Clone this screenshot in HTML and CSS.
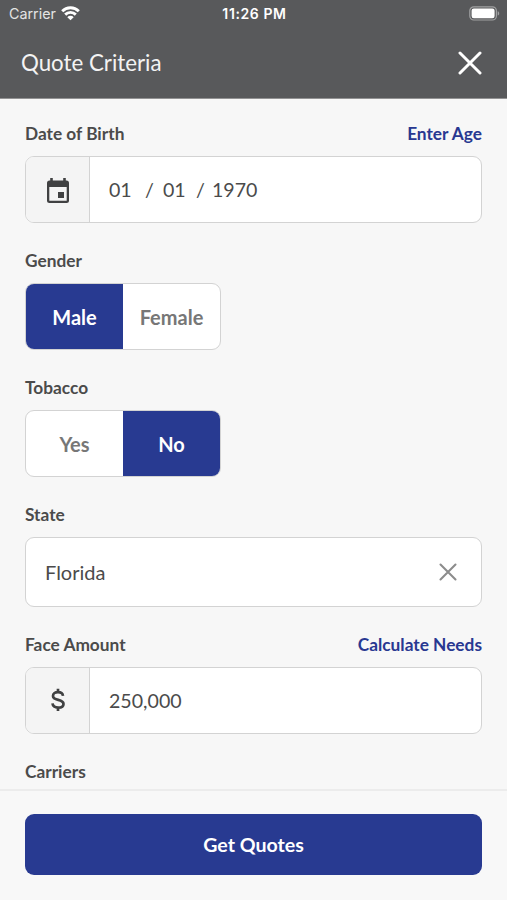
FILE: index.html
```html
<!DOCTYPE html>
<html lang="en">
<head>
<meta charset="utf-8">
<title>Quote Criteria</title>
<link rel="stylesheet" href="styles.css">
</head>
<body>
<div class="screen">
  <header class="header">
    <div class="status">
      <div class="carrier"><span>Carrier</span>
        <svg width="19" height="15" viewBox="0 0 19 15" fill="none" stroke="#fff" stroke-width="2.9"><path d="M1.2 5.2a11.8 11.8 0 0 1 16.6 0M4.2 8.6a7.5 7.5 0 0 1 10.6 0"/><path d="M9.5 14.3L6.3 11.2a4.5 4.5 0 0 1 6.4 0z" fill="#fff" stroke="none"/></svg>
      </div>
      <time class="clock">11:26 PM</time>
      <svg class="battery" width="31" height="15" viewBox="0 0 31 15"><rect x=".8" y=".8" width="26.6" height="13.2" rx="4" fill="none" stroke="#a0a1a2" stroke-width="1.2"/><rect x="2.6" y="2.6" width="23" height="9.6" rx="2.2" fill="#fff"/><path d="M28.7 5.2c2 .7 2 3.7 0 4.4z" fill="#a0a1a2"/></svg>
    </div>
    <div class="titlebar">
      <h1 class="title">Quote Criteria</h1>
      <svg class="close" width="24" height="24" viewBox="0 0 24 24" fill="none" stroke="#fff" stroke-width="3" stroke-linecap="round"><path d="M2 2l20 20M22 2L2 22"/></svg>
    </div>
  </header>
  <main class="form">
    <section class="field">
      <div class="label-row"><span class="label">Date of Birth</span><a class="link">Enter Age</a></div>
      <div class="box">
        <div class="addon"><svg class="calendar" width="24" height="26" viewBox="0 0 24 26"><path fill="#404142" fill-rule="evenodd" d="M4.2 0h2.6v2.5h10.4V0h2.6v2.5h.7A2.5 2.5 0 0 1 23 5v17.5a2.5 2.5 0 0 1-2.5 2.5h-17A2.5 2.5 0 0 1 1 22.500V5a2.5 2.5 0 0 1 2.5-2.500h.7zM3.300 9v13.700h17.400V9zM12 14h6v6h-6z"/></svg></div>
        <div class="value date"><span class="day">01</span><span class="sep">/</span><span class="month">01</span><span class="sep2">/</span><span>1970</span></div>
      </div>
    </section>
    <section class="field">
      <div class="label-row"><span class="label">Gender</span></div>
      <div class="box toggle"><div class="option selected">Male</div><div class="option">Female</div></div>
    </section>
    <section class="field">
      <div class="label-row"><span class="label">Tobacco</span></div>
      <div class="box toggle"><div class="option">Yes</div><div class="option selected">No</div></div>
    </section>
    <section class="field">
      <div class="label-row"><span class="label">State</span></div>
      <div class="box select"><span>Florida</span>
        <svg width="18" height="18" viewBox="0 0 18 18" fill="none" stroke="#8c8c8c" stroke-width="2.1" stroke-linecap="round"><path d="M1.500 1.500l15 15M16.500 1.500l-15 15"/></svg>
      </div>
    </section>
    <section class="field">
      <div class="label-row"><span class="label">Face Amount</span><a class="link">Calculate Needs</a></div>
      <div class="box">
        <div class="addon"><svg class="dollar" width="14" height="24" viewBox="0 0 14 24" fill="none" stroke="#404142" stroke-width="2.700"><path d="M7 .8v4M7 19v4M12 7.800C11.700 5.500 9.800 4.200 7 4.200S2 5.600 2 7.900c0 5.300 10.500 2.600 10.500 8 0 2.300-2.200 3.700-5.200 3.700-3.200 0-5.500-1.400-5.800-4.200"/></svg></div>
        <div class="value">250,000</div>
      </div>
    </section>
    <section class="field">
      <div class="label-row"><span class="label">Carriers</span></div>
    </section>
  </main>
  <footer class="footer"><button class="submit">Get Quotes</button></footer>
</div>
</body>
</html>
```
FILE: styles.css
```css
* { box-sizing: border-box; }
body { margin: 0; font-family: Lato, sans-serif; color: #4b4b4b; background: #f7f7f7; }
.screen { height: 900px; display: flex; flex-direction: column; overflow: hidden; }
.header { height: 98px; flex: none; background: #58595b; color: #fff; box-shadow: 0 1px 0 #929293; }
.status { height: 27px; display: grid; grid-template-columns: 1fr auto 1fr; align-items: center; padding: 0 7px 0 9px; font-family: Inter, sans-serif; font-size: 14px; }
.carrier { display: flex; align-items: center; gap: 5px; color: #e4e4e4; font-size: 14.3px; }
.clock { font-weight: 600; letter-spacing: 0.6px; }
.battery { justify-self: end; }
.titlebar { height: 71px; display: flex; align-items: center; justify-content: space-between; padding: 0 25px 0 21px; }
.title { margin: 0; font-size: 22.3px; font-weight: 400; color: #f3f3f3; }
.form { flex: 1; min-height: 0; overflow: hidden; padding: 24px 25px 0; display: flex; flex-direction: column; gap: 26px; }
.field { flex: none; display: flex; flex-direction: column; gap: 10px; }
.label-row { height: 24px; padding-bottom: 1px; display: flex; align-items: center; justify-content: space-between; font-size: 17.3px; font-weight: 700; }
.link { color: #283891; }
.box { height: 67px; display: flex; overflow: hidden; background: #fff; border: 1px solid #d3d3d3; border-radius: 9px; font-size: 20px; }
.addon { width: 64px; display: flex; align-items: center; justify-content: center; padding-left: 1px; background: #f4f4f4; border-right: 1px solid #d3d3d3; }
.calendar { margin-top: 2px; }
.dollar { margin-bottom: 1px; }
.value { display: flex; align-items: center; padding: 0 0 0 19px; font-size: 19.6px; }
.day { width: 36px; }
.sep { width: 18px; }
.month { width: 33px; }
.sep2 { width: 16px; }
.toggle { width: 196px; font-weight: 700; color: #777; }
.option { flex: 1; display: flex; align-items: center; justify-content: center; }
.selected { background: #283a91; color: #fff; }
.select { height: 70px; align-items: center; justify-content: space-between; padding: 0 24px 0 19px; }
.footer { height: 111px; flex: none; border-top: 2px solid #ececec; background: #f8f8f8; padding: 23px 25px 0; }
.submit { display: block; width: 100%; height: 61px; border: 0; border-radius: 9px; background: #283a91; color: #fff; font: 700 19.6px Lato, sans-serif; }
```
